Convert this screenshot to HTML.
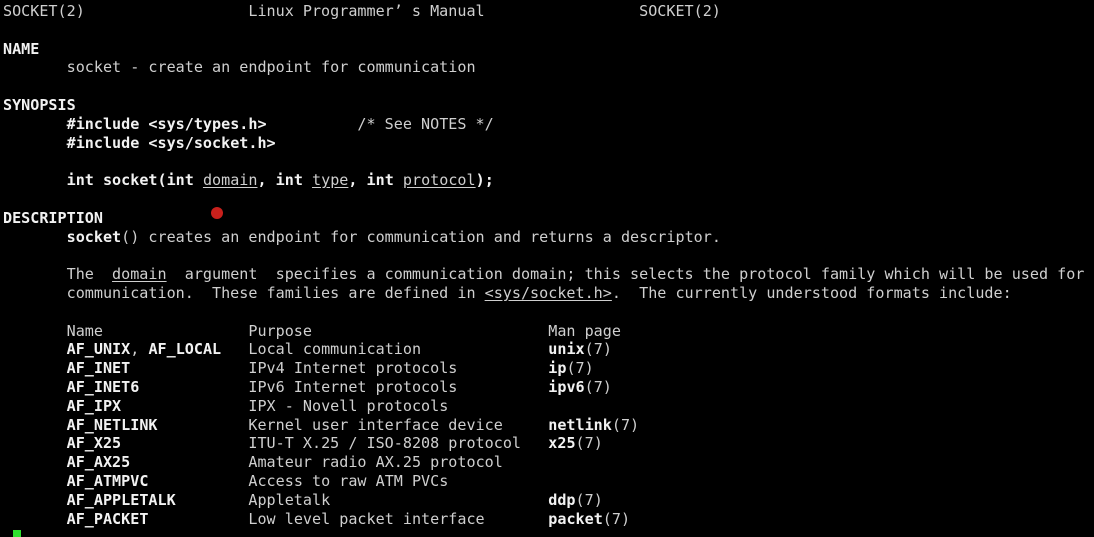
<!DOCTYPE html>
<html><head><style>
html,body{margin:0;padding:0;background:#000;width:1094px;height:537px;overflow:hidden}
pre{position:absolute;left:3px;top:2px;margin:0;font-family:"DejaVu Sans Mono","Liberation Mono",monospace;font-size:15.1px;line-height:18.8px;color:#cfcfcf;letter-spacing:0}
b{color:#f2f2f2}
u{text-decoration:underline;text-underline-offset:2px}
.dot{position:absolute;left:211px;top:207px;width:12px;height:12px;border-radius:50%;background:#c8201c}
.cur{position:absolute;left:13px;top:530px;width:8px;height:7px;background:#2ee02e}
</style></head><body>
<pre>SOCKET(2)                  Linux Programmer’ s Manual                 SOCKET(2)

<b>NAME</b>
       socket - create an endpoint for communication

<b>SYNOPSIS</b>
       <b>#include &lt;sys/types.h&gt;</b>          /* See NOTES */
       <b>#include &lt;sys/socket.h&gt;</b>

       <b>int socket(int</b> <u>domain</u><b>, int</b> <u>type</u><b>, int</b> <u>protocol</u><b>);</b>

<b>DESCRIPTION</b>
       <b>socket</b>() creates an endpoint for communication and returns a descriptor.

       The  <u>domain</u>  argument  specifies a communication domain; this selects the protocol family which will be used for
       communication.  These families are defined in <u>&lt;sys/socket.h&gt;</u>.  The currently understood formats include:

       Name                Purpose                          Man page
       <b>AF_UNIX</b>, <b>AF_LOCAL</b>   Local communication              <b>unix</b>(7)
       <b>AF_INET</b>             IPv4 Internet protocols          <b>ip</b>(7)
       <b>AF_INET6</b>            IPv6 Internet protocols          <b>ipv6</b>(7)
       <b>AF_IPX</b>              IPX - Novell protocols
       <b>AF_NETLINK</b>          Kernel user interface device     <b>netlink</b>(7)
       <b>AF_X25</b>              ITU-T X.25 / ISO-8208 protocol   <b>x25</b>(7)
       <b>AF_AX25</b>             Amateur radio AX.25 protocol
       <b>AF_ATMPVC</b>           Access to raw ATM PVCs
       <b>AF_APPLETALK</b>        Appletalk                        <b>ddp</b>(7)
       <b>AF_PACKET</b>           Low level packet interface       <b>packet</b>(7)</pre>
<div class="dot"></div>
<div class="cur"></div>
</body></html>
